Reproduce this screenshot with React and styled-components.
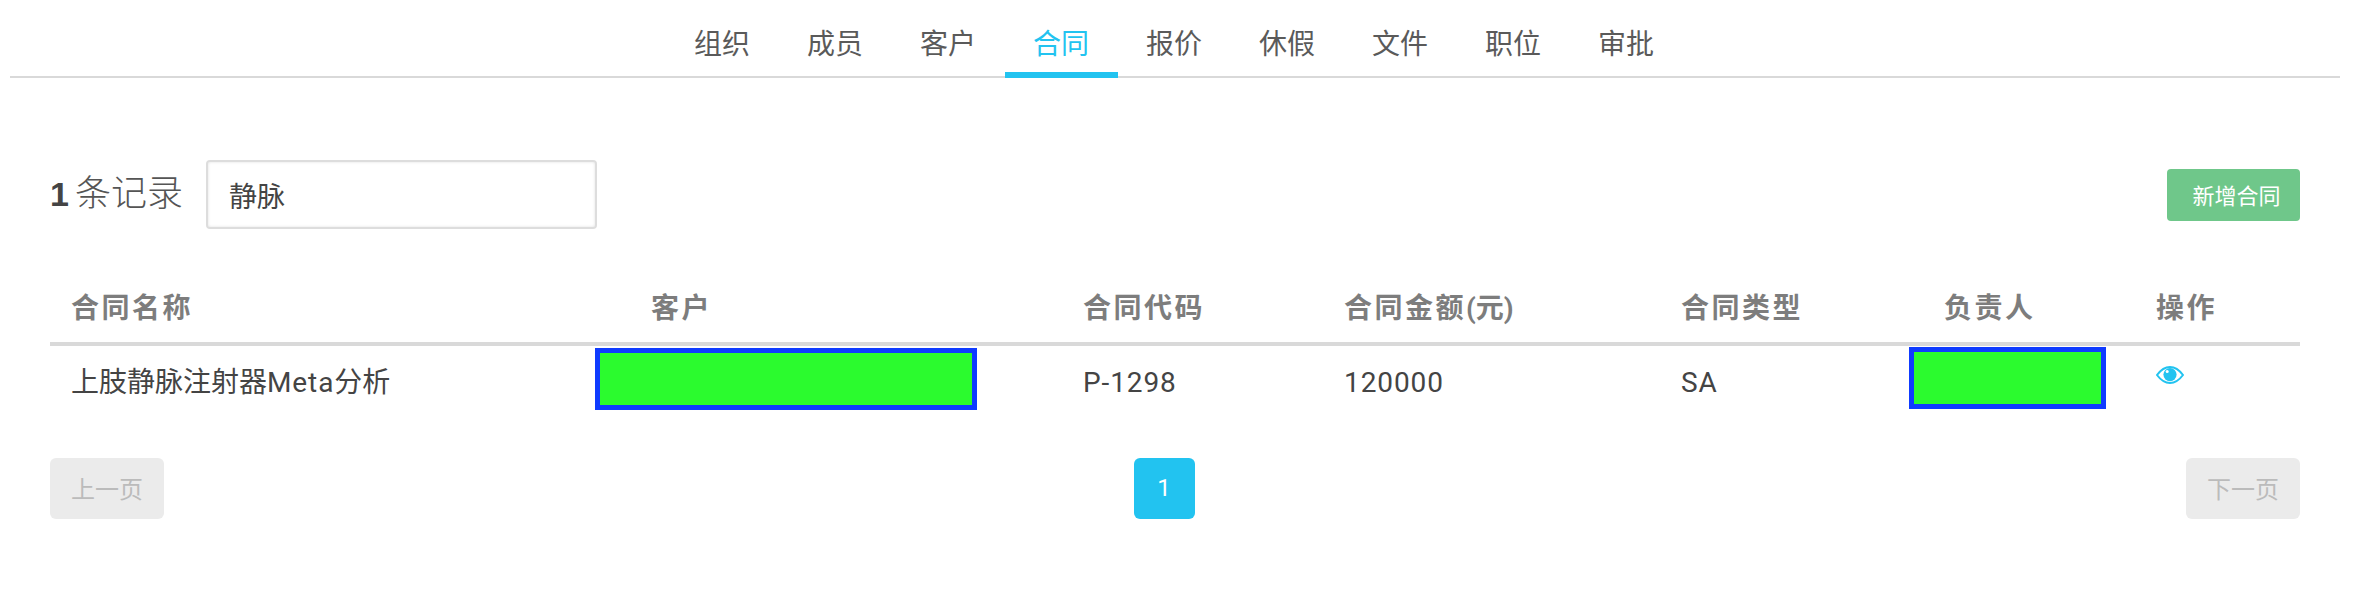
import React from 'react'
import styled, { createGlobalStyle } from 'styled-components'

const Global = createGlobalStyle`
    body {
        margin: 0;
        background: #fff;
        font-family: Roboto, 'Noto Sans CJK SC', sans-serif;
        color: #444;
    }
`

const Page = styled.div`
    width: 2354px;
    height: 598px;
    overflow: hidden;
`

const Nav = styled.nav`
    margin: 0 14px 0 10px;
    padding-right: 2px;
    height: 78px;
    box-sizing: border-box;
    border-bottom: 2px solid #d9d9d9;
    display: flex;
    justify-content: center;
`

const Tab = styled.a`
    width: 113px;
    height: 78px;
    box-sizing: border-box;
    padding-top: 25px;
    text-align: center;
    font-size: 28px;
    line-height: 40px;
    color: ${(p) => (p.$active ? '#22c3f0' : '#5a5a5a')};
    border-bottom: 6px solid ${(p) => (p.$active ? '#22c3f0' : 'transparent')};
`

const Content = styled.div`
    padding: 0 54px 0 50px;
`

const Toolbar = styled.div`
    margin-top: 82px;
    height: 69px;
    display: flex;
    align-items: center;
    justify-content: space-between;
`

const Search = styled.div`
    display: flex;
    align-items: center;
    gap: 23px;
`

const Count = styled.div`
    font-size: 36px;
    line-height: 60px;
    margin-bottom: 2px;
    color: #555;
    font-weight: 300;

    b {
        font-family: 'Liberation Sans', sans-serif;
        font-weight: 700;
        font-size: 34px;
        color: #444;
        margin-right: 6px;
    }
`

const Input = styled.input`
    width: 391px;
    height: 69px;
    box-sizing: border-box;
    border: 2px solid #ddd;
    border-radius: 4px;
    box-shadow: inset 0 0 3px rgba(0, 0, 0, 0.12);
    padding: 0 21px;
    font: 400 28px Roboto, 'Noto Sans CJK SC', sans-serif;
    color: #444;
    outline: none;
`

const AddButton = styled.button`
    width: 133px;
    height: 52px;
    border: 0;
    border-radius: 4px;
    background: #6fc78a;
    color: #fff;
    padding: 0 0 2px 6px;
    font: 400 22px Roboto, 'Noto Sans CJK SC', sans-serif;
`

const Row = styled.div`
    display: grid;
    grid-template-columns: 580px 432px 261px 337px 263px 212px 165px;
    align-items: center;
`

const HeadRow = styled(Row)`
    margin-top: 37px;
    height: 80px;
    border-bottom: 4px solid #d9d9d9;
    box-sizing: border-box;
    padding-top: 3px;
`

const BodyRow = styled(Row)`
    height: 72px;
`

const HeadCell = styled.div`
    padding-left: 21px;
    font-size: 28px;
    font-weight: 700;
    letter-spacing: 2.5px;
    color: #7d7d7d;
`

const HeadUnit = styled.span`
    letter-spacing: 0;
`

const Cell = styled.div`
    position: relative;
    padding-left: 21px;
    font-size: 28px;
    line-height: 74px;
    height: 72px;
    color: #444;
`

const Latin = styled.span`
    letter-spacing: 0.9px;
`

// redaction block laid over the cell's content
const Redacted = styled.div`
    position: absolute;
    top: ${(p) => p.$top}px;
    left: ${(p) => p.$left}px;
    width: ${(p) => p.$width}px;
    height: 62px;
    box-sizing: border-box;
    background: #2bfb2e;
    border: 5px solid #0f3bff;
`

const EyeIcon = styled.svg`
    display: block;
    width: 28px;
    height: 18px;
    margin-top: 20px;
    color: #22c3f0;
`

const Pager = styled.div`
    margin-top: 40px;
    display: flex;
    align-items: center;
    justify-content: space-between;
`

const PageStep = styled.div`
    width: 114px;
    height: 61px;
    padding-bottom: 2px;
    box-sizing: border-box;
    border-radius: 6px;
    background: #ebebeb;
    color: #bbb;
    font-size: 24px;
    display: flex;
    align-items: center;
    justify-content: center;
`

const PageNumber = styled.div`
    width: 61px;
    height: 61px;
    padding-bottom: 2px;
    box-sizing: border-box;
    margin-right: 22px;
    border-radius: 6px;
    background: #22c3f0;
    color: #fff;
    font-size: 24px;
    display: flex;
    align-items: center;
    justify-content: center;
`

const tabs = ['组织', '成员', '客户', '合同', '报价', '休假', '文件', '职位', '审批']

const Eye = () => (
    <EyeIcon viewBox="0 0 28 18">
        <path
            d="M1 9C5 3.6 9.2 1 14 1s9 2.6 13 8c-4 5.4-8.2 8-13 8S5 14.4 1 9z"
            fill="none"
            stroke="currentColor"
            strokeWidth="2"
        />
        <circle cx="14" cy="8.6" r="6.6" fill="currentColor" />
        <circle cx="11.2" cy="5.4" r="1.5" fill="#fff" />
    </EyeIcon>
)

const App = () => (
    <Page>
        <Global />
        <Nav>
            {tabs.map((t) => (
                <Tab key={t} $active={t === '合同'}>{t}</Tab>
            ))}
        </Nav>
        <Content>
            <Toolbar>
                <Search>
                    <Count><b>1</b>条记录</Count>
                    <Input defaultValue="静脉" />
                </Search>
                <AddButton>新增合同</AddButton>
            </Toolbar>
            <HeadRow>
                <HeadCell>合同名称</HeadCell>
                <HeadCell>客户</HeadCell>
                <HeadCell>合同代码</HeadCell>
                <HeadCell>合同金额<HeadUnit>(元)</HeadUnit></HeadCell>
                <HeadCell>合同类型</HeadCell>
                <HeadCell>负责人</HeadCell>
                <HeadCell>操作</HeadCell>
            </HeadRow>
            <BodyRow>
                <Cell>上肢静脉注射器<Latin>Meta</Latin>分析</Cell>
                <Cell><Redacted $top={2} $left={-35} $width={382} /></Cell>
                <Cell><Latin>P-1298</Latin></Cell>
                <Cell><Latin>120000</Latin></Cell>
                <Cell><Latin>SA</Latin></Cell>
                <Cell><Redacted $top={1} $left={-14} $width={197} /></Cell>
                <Cell><Eye /></Cell>
            </BodyRow>
            <Pager>
                <PageStep>上一页</PageStep>
                <PageNumber>1</PageNumber>
                <PageStep>下一页</PageStep>
            </Pager>
        </Content>
    </Page>
)

export default App
